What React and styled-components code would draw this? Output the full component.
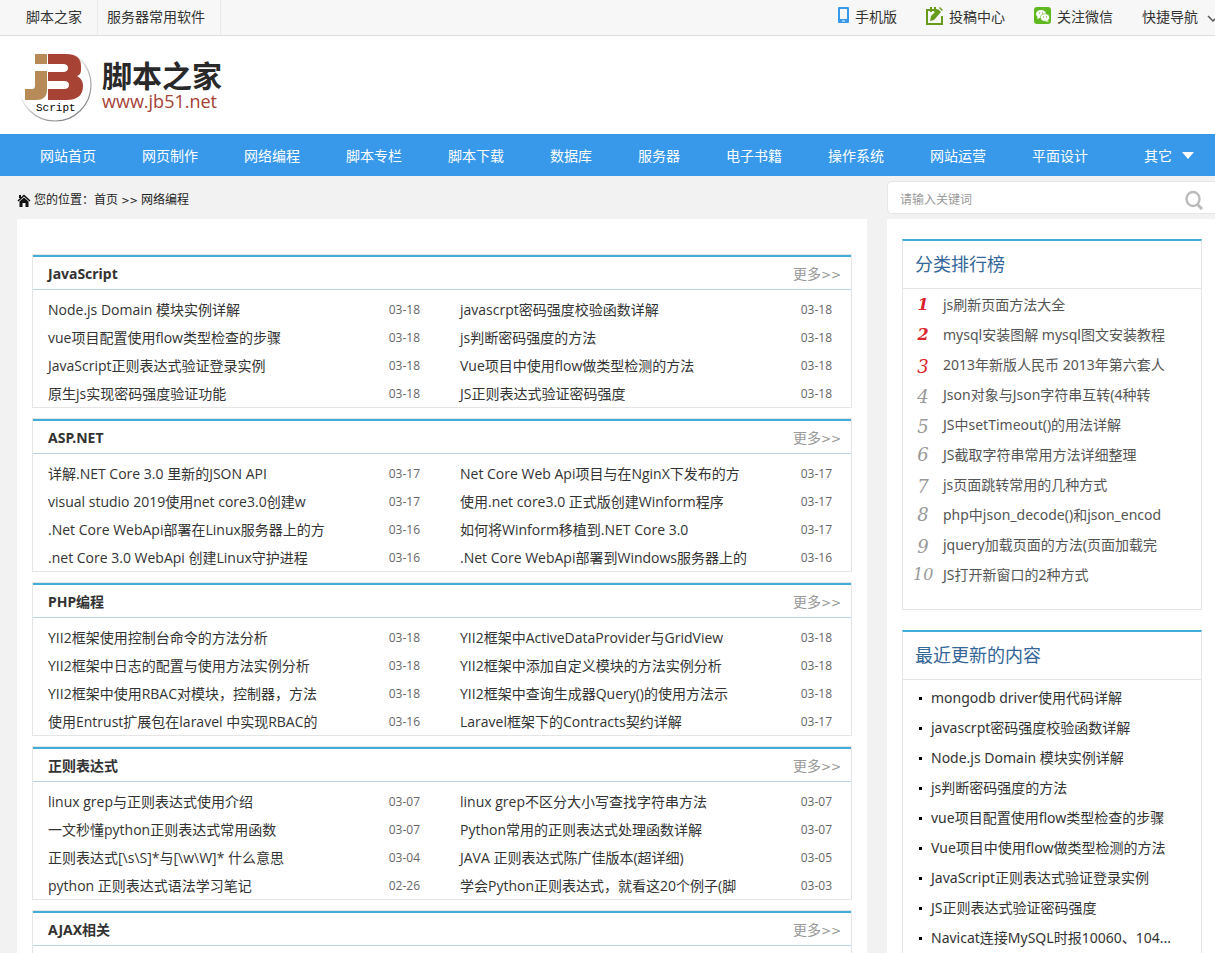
import React, { useState } from "react";
import styled, { createGlobalStyle } from "styled-components";

const GlobalStyle = createGlobalStyle`
  * {
    box-sizing: border-box;
  }
  body {
    margin: 0;
    background: #f2f2f2;
    color: #333;
    font: 14px/28px "Open Sans", "Noto Sans CJK SC", sans-serif;
  }
  a {
    color: inherit;
    text-decoration: none;
  }
  ul, ol {
    list-style: none;
    margin: 0;
    padding: 0;
  }
`;

const Page = styled.div`
  height: 100vh;
  overflow: hidden;
`;

const TopBar = styled.div`
  display: flex;
  justify-content: space-between;
  height: 36px;
  padding-left: 17px;
  background: #f7f7f7;
  border-bottom: 1px solid #ddd;
  line-height: 33px;
  white-space: nowrap;
`;

const TopLinks = styled.nav`
  display: flex;
`;

const TopLink = styled.a`
  padding: 0 15px 0 9px;
  border-right: 1px solid #e9e9e9;
`;

const Tools = styled.div`
  display: flex;
  gap: 29px;
`;

const Tool = styled.a`
  display: flex;
  gap: 5px;

  svg {
    flex: none;
    margin-top: 7px;
  }
`;

const QuickNav = styled.button`
  display: flex;
  gap: 9px;
  width: 73px;
  padding: 0;
  border: 0;
  overflow: hidden;
  background: none;
  color: inherit;
  font: inherit;

  svg {
    flex: none;
    margin-top: 14px;
  }
`;

const Header = styled.header`
  display: flex;
  gap: 8px;
  height: 98px;
  padding: 16px 0 0 18px;
  background: #fff;
`;

const LogoText = styled.a`
  display: flex;
  flex-direction: column;
  padding-top: 9px;
`;

const LogoName = styled.strong`
  color: #292929;
  font-size: 30px;
  font-weight: 700;
  line-height: 30px;
`;

const LogoUrl = styled.span`
  color: #a64136;
  font-size: 18px;
  line-height: 20px;
`;

const NavBar = styled.nav`
  display: flex;
  height: 42px;
  padding-left: 17px;
  background: #3899ea;
  color: #fff;
  line-height: 43px;
  white-space: nowrap;
`;

const NavLink = styled.a`
  padding: 0 23px;
`;

const NavMore = styled.button`
  display: flex;
  gap: 10px;
  align-items: center;
  padding: 0 0 0 33px;
  border: 0;
  background: none;
  color: inherit;
  font: inherit;
`;

const Columns = styled.div`
  display: grid;
  grid-template-columns: minmax(0, 1fr) 328px;
  column-gap: 20px;
  padding-left: 17px;
`;

const Crumbs = styled.div`
  display: flex;
  gap: 3px;
  align-items: center;
  height: 43px;
  padding-top: 6px;
  color: #222;
  font-size: 12px;
`;

const Arrows = styled.span`
  font-family: "DejaVu Sans", sans-serif;
  font-size: ${(props) => (props.$small ? "10px" : "12px")};
`;

const SearchForm = styled.form`
  display: flex;
  align-items: center;
  height: 33px;
  margin: 5px 0;
  padding-right: 11px;
  border: 1px solid #e6e6e6;
  border-right: 0;
  border-radius: 5px 0 0 5px;
  background: #fff;
`;

const SearchInput = styled.input`
  flex: 1;
  min-width: 0;
  padding: 5px 12px 0;
  border: 0;
  outline: none;
  background: none;
  color: #333;
  font: inherit;
  font-size: 12px;

  &::placeholder {
    color: #999;
  }
`;

const SearchButton = styled.button`
  display: flex;
  padding: 4px 0 0;
  border: 0;
  background: none;
`;

const Main = styled.main`
  display: flex;
  flex-direction: column;
  gap: 10px;
  padding: 35px 15px;
  background: #fff;
`;

const Card = styled.section`
  border: 1px solid #e5e5e5;
`;

const CardHead = styled.div`
  display: flex;
  justify-content: space-between;
  height: 35px;
  padding: 0 10px 0 15px;
  border-top: 2px solid #40aed8;
  border-bottom: 1px solid #bad5e2;
  line-height: 33px;
`;

const CardTitle = styled.h2`
  margin: 0;
  font-family: "Noto Sans", "Noto Sans CJK SC", sans-serif;
  font-size: 14px;
`;

const MoreLink = styled.a`
  color: #999;
`;

const ArticleList = styled.ul`
  display: grid;
  grid-template-columns: 1fr 1fr;
  grid-auto-rows: 28px;
  column-gap: 40px;
  height: 117px;
  padding: 6px 19px 0 15px;
`;

const Article = styled.li`
  display: flex;
  justify-content: space-between;
  white-space: nowrap;
`;

const ArticleDate = styled.time`
  color: #666;
  font-size: 12px;
`;

const Sidebar = styled.aside`
  display: flex;
  flex-direction: column;
  gap: 20px;
  padding: 20px 13px 20px 15px;
  background: #fff;
  font-family: "Noto Sans", "Noto Sans CJK SC", sans-serif;
`;

const SideCard = styled.section`
  padding-bottom: 19px;
  border: 1px solid #e5e5e5;
  border-top: 2px solid #40aed8;
`;

const SideTitle = styled.h2`
  margin: 0;
  padding-left: 12px;
  border-bottom: 1px solid #e5e5e5;
  color: #369;
  font-size: 18px;
  font-weight: 400;
  line-height: 47px;
`;

const RankList = styled.ol`
  padding-top: 1px;
`;

const RankItem = styled.li`
  display: grid;
  grid-template-columns: 20px 1fr;
  column-gap: 10px;
  padding-left: 10px;
  color: #555;
  line-height: 30px;
  white-space: nowrap;
`;

const RankNumber = styled.span`
  height: 30px;
  padding-top: ${(props) => (props.$low ? "2px" : "0")};
  color: ${(props) => (props.$top ? "#d9252b" : "#999")};
  font-family: "DejaVu Serif", serif;
  font-size: ${(props) => (props.$small ? "16px" : "18px")};
  font-style: italic;
  font-weight: ${(props) => (props.$bold ? 700 : 400)};
  line-height: 30px;
  text-align: center;
`;

const RecentList = styled.ul`
  padding-top: 3px;
`;

const RecentItem = styled.li`
  display: flex;
  gap: 9px;
  align-items: center;
  padding-left: 16px;
  line-height: 30px;
  white-space: nowrap;

  &::before {
    content: "";
    width: 3px;
    height: 3px;
    background: #000;
  }
`;

const navItems = [
  "网站首页", "网页制作", "网络编程", "脚本专栏", "脚本下载", "数据库",
  "服务器", "电子书籍", "操作系统", "网站运营", "平面设计",
];

const categories = [
  {
    title: "JavaScript",
    articles: [
      ["Node.js Domain 模块实例详解", "03-18"],
      ["javascrpt密码强度校验函数详解", "03-18"],
      ["vue项目配置使用flow类型检查的步骤", "03-18"],
      ["js判断密码强度的方法", "03-18"],
      ["JavaScript正则表达式验证登录实例", "03-18"],
      ["Vue项目中使用flow做类型检测的方法", "03-18"],
      ["原生js实现密码强度验证功能", "03-18"],
      ["JS正则表达式验证密码强度", "03-18"],
    ],
  },
  {
    title: "ASP.NET",
    articles: [
      ["详解.NET Core 3.0 里新的JSON API", "03-17"],
      ["Net Core Web Api项目与在NginX下发布的方", "03-17"],
      ["visual studio 2019使用net core3.0创建w", "03-17"],
      ["使用.net core3.0 正式版创建Winform程序", "03-17"],
      [".Net Core WebApi部署在Linux服务器上的方", "03-16"],
      ["如何将Winform移植到.NET Core 3.0", "03-17"],
      [".net Core 3.0 WebApi 创建Linux守护进程", "03-16"],
      [".Net Core WebApi部署到Windows服务器上的", "03-16"],
    ],
  },
  {
    title: "PHP编程",
    articles: [
      ["YII2框架使用控制台命令的方法分析", "03-18"],
      ["YII2框架中ActiveDataProvider与GridView", "03-18"],
      ["YII2框架中日志的配置与使用方法实例分析", "03-18"],
      ["YII2框架中添加自定义模块的方法实例分析", "03-18"],
      ["YII2框架中使用RBAC对模块，控制器，方法", "03-18"],
      ["YII2框架中查询生成器Query()的使用方法示", "03-18"],
      ["使用Entrust扩展包在laravel 中实现RBAC的", "03-16"],
      ["Laravel框架下的Contracts契约详解", "03-17"],
    ],
  },
  {
    title: "正则表达式",
    articles: [
      ["linux grep与正则表达式使用介绍", "03-07"],
      ["linux grep不区分大小写查找字符串方法", "03-07"],
      ["一文秒懂python正则表达式常用函数", "03-07"],
      ["Python常用的正则表达式处理函数详解", "03-07"],
      ["正则表达式[\\s\\S]*与[\\w\\W]* 什么意思", "03-04"],
      ["JAVA 正则表达式陈广佳版本(超详细)", "03-05"],
      ["python 正则表达式语法学习笔记", "02-26"],
      ["学会Python正则表达式，就看这20个例子(脚", "03-03"],
    ],
  },
  { title: "AJAX相关", articles: [] },
];

const ranking = [
  "js刷新页面方法大全",
  "mysql安装图解 mysql图文安装教程",
  "2013年新版人民币 2013年第六套人",
  "Json对象与Json字符串互转(4种转",
  "JS中setTimeout()的用法详解",
  "JS截取字符串常用方法详细整理",
  "js页面跳转常用的几种方式",
  "php中json_decode()和json_encod",
  "jquery加载页面的方法(页面加载完",
  "JS打开新窗口的2种方式",
];

const recent = [
  "mongodb driver使用代码详解",
  "javascrpt密码强度校验函数详解",
  "Node.js Domain 模块实例详解",
  "js判断密码强度的方法",
  "vue项目配置使用flow类型检查的步骤",
  "Vue项目中使用flow做类型检测的方法",
  "JavaScript正则表达式验证登录实例",
  "JS正则表达式验证密码强度",
  "Navicat连接MySQL时报10060、104...",
];

function Logo() {
  return (
    <svg width="76" height="72" viewBox="0 0 76 72">
      <defs>
        <linearGradient id="ring" x1="0.2" y1="0.2" x2="0.7" y2="0.9">
          <stop offset="0.25" stopColor="#999" stopOpacity="0" />
          <stop offset="0.6" stopColor="#999" stopOpacity="0.6" />
          <stop offset="1" stopColor="#888" />
        </linearGradient>
      </defs>
      <circle cx="37" cy="33" r="36" fill="none" stroke="url(#ring)" strokeWidth="1.2" />
      <path d="M17 2h12v10H17zM17 19h12v19q0 10-11 10H7V37h7q3 0 3-3z" fill="#b78b57" />
      <path d="M30 2h18q15 0 15 12v4q0 5-4 6 6 3 6 10 0 14-17 14H30V37h16q5 0 5-4t-5-4H30v-9h15q5 0 5-4t-5-4H30z" fill="#a64335" />
      <text x="18" y="59" fontFamily="Liberation Mono, monospace" fontSize="11">Script</text>
    </svg>
  );
}

function PhoneIcon() {
  return (
    <svg width="12" height="17" viewBox="0 0 12 17">
      <rect width="11" height="16" rx="1" fill="#3899ea" />
      <path d="M2 2h7v10H2z" fill="#f7f7f7" />
      <path d="M4 14h3" stroke="#fff" />
    </svg>
  );
}

function EditIcon() {
  return (
    <svg width="18" height="18" viewBox="0 0 18 18">
      <path d="M11 3H1v14h15V9" fill="none" stroke="#669b1c" strokeWidth="2" />
      <path d="M4 14l1-5 7-7 3 3-7 8zM13 1l1-1 3 3-1 1z" fill="#669b1c" />
      <path d="M5 0v5M9 0v5" stroke="#669b1c" strokeWidth="2" />
    </svg>
  );
}

function WechatIcon() {
  return (
    <svg width="18" height="17" viewBox="0 0 18 17">
      <rect width="17" height="17" rx="3" fill="#5fb81e" />
      <ellipse cx="7" cy="7" rx="5" ry="4" fill="#fff" />
      <path d="M4 9l-1 3 3-1z" fill="#fff" />
      <ellipse cx="11" cy="10.500" rx="4.500" ry="3.700" fill="#fff" stroke="#5fb81e" strokeWidth=".6" />
      <path d="M13 13l2 2-4-1z" fill="#fff" />
      <path d="M5 6h1M8 6h1M9 10h1M12 10h1" stroke="#5fb81e" />
    </svg>
  );
}

function HomeIcon() {
  return (
    <svg width="14" height="16" viewBox="0 0 14 16">
      <path d="M1 8l6-5.500L13 8" fill="none" stroke="#111" strokeWidth="1.600" />
      <path d="M2.500 8.500L7 4.500l4.500 4V14H8.500V10h-3v4h-3zM2 2h2v3H2z" fill="#111" />
    </svg>
  );
}

export default function App() {
  const [keyword, setKeyword] = useState("");

  return (
    <Page>
      <GlobalStyle />
      <TopBar>
        <TopLinks>
          <TopLink href="#">脚本之家</TopLink>
          <TopLink href="#">服务器常用软件</TopLink>
        </TopLinks>
        <Tools>
          <Tool href="#"><PhoneIcon />手机版</Tool>
          <Tool href="#"><EditIcon />投稿中心</Tool>
          <Tool href="#"><WechatIcon />关注微信</Tool>
          <QuickNav>
            快捷导航
            <svg width="13" height="8" viewBox="0 0 13 8">
              <path d="M1 2l5 5 5-5" fill="none" stroke="#555" strokeWidth="1.500" />
            </svg>
          </QuickNav>
        </Tools>
      </TopBar>
      <Header>
        <Logo />
        <LogoText href="#">
          <LogoName>脚本之家</LogoName>
          <LogoUrl>www.jb51.net</LogoUrl>
        </LogoText>
      </Header>
      <NavBar>
        {navItems.map((item) => (
          <NavLink href="#" key={item}>{item}</NavLink>
        ))}
        <NavMore>
          其它
          <svg width="12" height="7" viewBox="0 0 12 7">
            <path d="M0 0h12L6 7z" fill="#fff" />
          </svg>
        </NavMore>
      </NavBar>
      <Columns>
        <Crumbs>
          <HomeIcon />
          <span>
            您的位置：<a href="#">首页</a> <Arrows $small>&gt;&gt;</Arrows> <a href="#">网络编程</a>
          </span>
        </Crumbs>
        <SearchForm onSubmit={(event) => event.preventDefault()}>
          <SearchInput
            aria-label="请输入关键词"
            placeholder="请输入关键词"
            value={keyword}
            onChange={(event) => setKeyword(event.target.value)}
          />
          <SearchButton aria-label="搜索">
            <svg width="20" height="20" viewBox="0 0 20 20">
              <ellipse cx="9" cy="9" rx="6.500" ry="7" fill="none" stroke="#bbb" strokeWidth="2.400" />
              <path d="M13 14l5 5" stroke="#bbb" strokeWidth="3" />
            </svg>
          </SearchButton>
        </SearchForm>
        <Main>
          {categories.map((category) => (
            <Card key={category.title}>
              <CardHead>
                <CardTitle>{category.title}</CardTitle>
                <MoreLink href="#">更多<Arrows>&gt;&gt;</Arrows></MoreLink>
              </CardHead>
              <ArticleList>
                {category.articles.map(([title, date]) => (
                  <Article key={title}>
                    <a href="#">{title}</a>
                    <ArticleDate>{date}</ArticleDate>
                  </Article>
                ))}
              </ArticleList>
            </Card>
          ))}
        </Main>
        <Sidebar>
          <SideCard>
            <SideTitle>分类排行榜</SideTitle>
            <RankList>
              {ranking.map((title, i) => (
                <RankItem key={title}>
                  <RankNumber
                    $top={i < 3}
                    $bold={i < 2}
                    $small={i < 2 || i === 9}
                    $low={[3, 4, 5, 7, 9].includes(i + 1)}
                  >
                    {i + 1}
                  </RankNumber>
                  <a href="#">{title}</a>
                </RankItem>
              ))}
            </RankList>
          </SideCard>
          <SideCard>
            <SideTitle>最近更新的内容</SideTitle>
            <RecentList>
              {recent.map((title) => (
                <RecentItem key={title}>
                  <a href="#">{title}</a>
                </RecentItem>
              ))}
            </RecentList>
          </SideCard>
        </Sidebar>
      </Columns>
    </Page>
  );
}
